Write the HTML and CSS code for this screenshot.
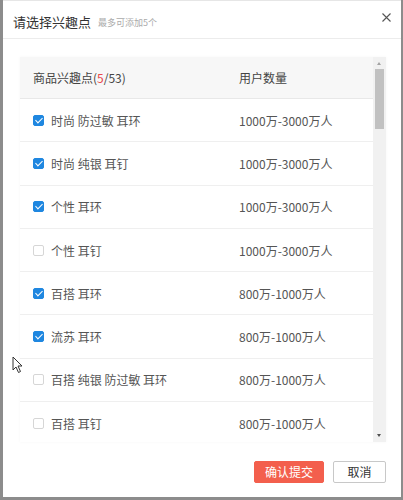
FILE: index.html
```html
<!DOCTYPE html>
<html lang="zh-CN">
<head>
<meta charset="utf-8">
<title>请选择兴趣点</title>
<link rel="stylesheet" href="styles.css">
</head>
<body>
<div class="modal">
  <div class="header">
    <span class="title">请选择兴趣点</span>
    <span class="sub">最多可添加5个</span>
    <span class="close"><svg width="9" height="9" viewBox="0 0 9 9"><path d="M0.5 0.5L8.5 8.5M8.5 0.5L0.5 8.5" stroke="#555" stroke-width="1.1" fill="none"/></svg></span>
  </div>
  <div class="body">
    <div class="table">
      <div class="list">
        <div class="row head"><span class="c1">商品兴趣点(<em>5</em>/53)</span><span class="c2">用户数量</span></div>
        <div class="row"><span class="c1"><i class="cb on"></i>时尚 防过敏 耳环</span><span class="c2">1000万-3000万人</span></div>
        <div class="row"><span class="c1"><i class="cb on"></i>时尚 纯银 耳钉</span><span class="c2">1000万-3000万人</span></div>
        <div class="row"><span class="c1"><i class="cb on"></i>个性 耳环</span><span class="c2">1000万-3000万人</span></div>
        <div class="row"><span class="c1"><i class="cb"></i>个性 耳钉</span><span class="c2">1000万-3000万人</span></div>
        <div class="row"><span class="c1"><i class="cb on"></i>百搭 耳环</span><span class="c2">800万-1000万人</span></div>
        <div class="row"><span class="c1"><i class="cb on"></i>流苏 耳环</span><span class="c2">800万-1000万人</span></div>
        <div class="row"><span class="c1"><i class="cb"></i>百搭 纯银 防过敏 耳环</span><span class="c2">800万-1000万人</span></div>
        <div class="row"><span class="c1"><i class="cb"></i>百搭 耳钉</span><span class="c2">800万-1000万人</span></div>
      </div>
      <div class="scrollbar">
        <span class="arrow up"></span>
        <span class="thumb"></span>
        <span class="track"></span>
        <span class="arrow down"></span>
      </div>
    </div>
  </div>
  <div class="footer">
    <button class="btn primary">确认提交</button>
    <button class="btn">取消</button>
  </div>
</div>
<svg class="cursor" width="12" height="18" viewBox="0 0 12 18"><path d="M1 1L1 14L4 11L6.5 16.5L8.5 15.5L6 10L10 10Z" fill="#fff" stroke="#333" stroke-width="1"/></svg>
</body>
</html>
```
FILE: styles.css
```css
html, body {
  margin: 0;
  padding: 0;
}
body {
  width: 403px;
  height: 500px;
  background: #8c8c8c;
  font-family: "Noto Sans CJK SC", "Noto Sans", sans-serif;
  position: relative;
  overflow: hidden;
}
.modal {
  margin: 0 2px 0 3px;
  height: 497px;
  background: #fff;
  border-top: 1px solid #e6e6e6;
  box-sizing: border-box;
  display: flex;
  flex-direction: column;
}
.header {
  height: 38px;
  border-bottom: 1px solid #ececec;
  display: flex;
  align-items: center;
  padding: 3px 0 0 10px;
  box-sizing: border-box;
}
.title {
  font-size: 13px;
  color: #333;
}
.sub {
  font-size: 9px;
  color: #aaa;
  margin-left: 7px;
  margin-top: 2px;
}
.close {
  margin-left: auto;
  margin-right: 10px;
  align-self: flex-start;
  margin-top: 9px;
  line-height: 0;
}
.body {
  padding: 18px 15px 0 17px;
}
.table {
  display: flex;
  height: 385px;
  box-shadow: 0 0 3px rgba(0,0,0,0.04);
}
.list {
  flex: 1;
  overflow: hidden;
  background: #fff;
}
.row {
  display: grid;
  grid-template-columns: 206px 1fr;
  align-items: center;
  height: 43.3px;
  border-top: 1px solid #efefef;
  box-sizing: border-box;
  font-size: 12px;
  color: #555;
  padding-left: 13px;
}
.row.head {
  height: 41px;
  border-top: none;
  background: #f7f7f7;
  color: #444;
}
.row.head + .row {
  border-top: 1px solid #e8e8e8;
}
.c1 {
  display: flex;
  align-items: center;
}
em {
  font-style: normal;
  color: #e9494a;
}
.cb {
  width: 11px;
  height: 11px;
  border: 1px solid #d6d6d6;
  border-radius: 2px;
  box-sizing: border-box;
  margin-right: 7px;
  background: #fff;
  position: relative;
}
.cb.on {
  background: #1f87e0;
  border-color: #1f87e0;
}
.cb.on::after {
  content: "";
  position: absolute;
  left: 3px;
  top: 0px;
  width: 3px;
  height: 6px;
  border: solid #fff;
  border-width: 0 1.6px 1.6px 0;
  transform: rotate(45deg);
}
.scrollbar {
  width: 13px;
  background: #f1f1f1;
  display: flex;
  flex-direction: column;
  align-items: center;
}
.arrow {
  height: 12px;
  width: 13px;
  position: relative;
}
.arrow::after {
  content: "";
  position: absolute;
  left: 4px;
  width: 0;
  height: 0;
  border-left: 2.5px solid transparent;
  border-right: 2.5px solid transparent;
}
.arrow.up::after {
  top: 5px;
  border-bottom: 3px solid #a3a3a3;
}
.arrow.down::after {
  top: 4px;
  border-top: 3px solid #505050;
}
.thumb {
  width: 9px;
  height: 60px;
  background: #c1c1c1;
}
.track {
  flex: 1;
}
.footer {
  display: flex;
  justify-content: flex-end;
  gap: 9px;
  padding: 19px 15px 0 0;
}
.btn {
  height: 22px;
  font-family: inherit;
  font-size: 12px;
  border-radius: 2px;
  padding: 0;
  line-height: 1;
  display: flex;
  align-items: center;
  justify-content: center;
  box-sizing: border-box;
  cursor: pointer;
}
.btn.primary {
  width: 70px;
  background: #f35f4d;
  border: 1px solid #f35f4d;
  color: #fff;
}
.btn:not(.primary) {
  width: 53px;
  background: #fff;
  border: 1px solid #c8c8c8;
  color: #333;
}
.cursor {
  position: absolute;
  left: 12px;
  top: 356px;
}
```
